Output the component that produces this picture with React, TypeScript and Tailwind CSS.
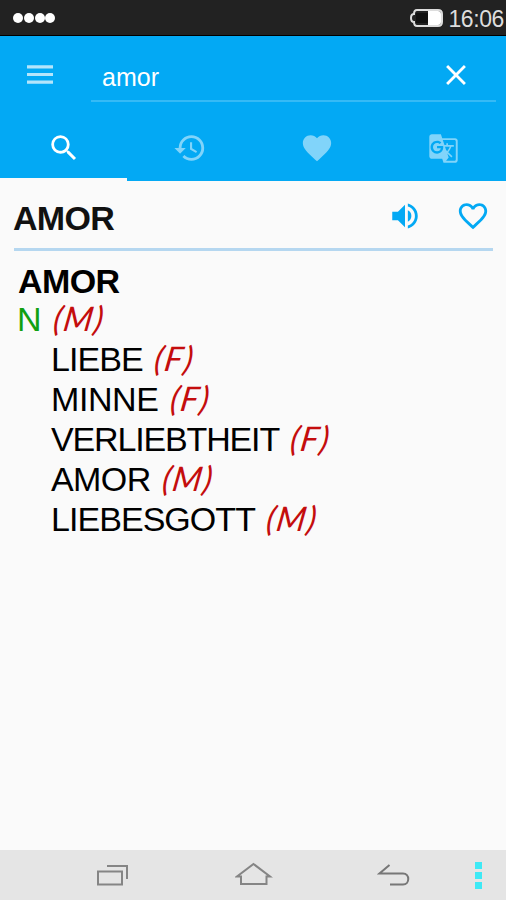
import clsx from "clsx";
import {
  MdClose,
  MdFavorite,
  MdFavoriteBorder,
  MdGTranslate,
  MdHistory,
  MdSearch,
  MdVolumeUp,
} from "react-icons/md";

const tabs = [
  { id: "search", label: "Search", Icon: MdSearch, size: "size-[34px]" },
  { id: "history", label: "History", Icon: MdHistory, size: "size-[34px]" },
  { id: "favorites", label: "Favorites", Icon: MdFavorite, size: "size-[34px]" },
  { id: "translate", label: "Translate", Icon: MdGTranslate, size: "size-[31px] mt-[2px]" },
];

const translations = [
  { word: "LIEBE", gender: "(F)", tracking: "tracking-[-0.9px]" },
  { word: "MINNE", gender: "(F)", tracking: "tracking-[-0.4px]" },
  { word: "VERLIEBTHEIT", gender: "(F)", tracking: "tracking-[-1.15px]" },
  { word: "AMOR", gender: "(M)", tracking: "tracking-[-0.6px]" },
  { word: "LIEBESGOTT", gender: "(M)", tracking: "tracking-[-0.95px]" },
];

function StatusBar() {
  return (
    <div className="flex h-9 items-center justify-between border-b border-black bg-[#222] pr-[2px] pl-[13px]">
      <div className="flex">
        {[0, 1, 2, 3].map((n) => (
          <span key={n} className="mr-[0.8px] size-[10px] rounded-full bg-white" />
        ))}
      </div>
      <div className="flex items-center">
        <svg className="h-5 w-[34px]" viewBox="0 0 34 20" fill="none">
          <path
            d="M7 2h21q4 0 4 4v8q0 4-4 4H7q-3 0-3-4-3 0-3-4t3-4q0-4 3-4z"
            stroke="#ddd"
            strokeWidth="2"
          />
          <path d="M6 5h12v10H6z" fill="#111" />
          <path d="M18 3h10q3 0 3 3v8q0 3-3 3H18z" fill="#fff" />
        </svg>
        <span className="mt-[3px] ml-[4px] text-[23px] leading-none tracking-[-0.4px] text-[#ddd]">16:06</span>
      </div>
    </div>
  );
}

function MenuIcon() {
  return (
    <svg className="mt-[6px] ml-1 h-[22px] w-[26px] opacity-70" viewBox="0 0 26 22" stroke="currentColor" strokeWidth="3.200">
      <path d="M0 2.800h26M0 10.500h26M0 18.200h26" />
    </svg>
  );
}

function Header() {
  return (
    <header className="h-[145px] bg-[#03a9f4] text-white">
      <div className="flex h-[79px] pt-[22px] pl-[23px]">
        <MenuIcon />
        <div className="ml-[38px] flex h-[44px] w-[405px] justify-between border-b-2 border-white/20 pl-[11px]">
          <span className="pt-[5px] text-[25px] leading-[28px]">amor</span>
          <MdClose className="mr-[23px] size-[34px]" />
        </div>
      </div>
      <nav className="grid h-[66px] grid-cols-4">
        {tabs.map(({ id, label, Icon, size }, i) => (
          <button
            key={id}
            aria-label={label}
            className={clsx(
              "flex items-start justify-center border-b-3 pt-4 pl-px",
              i === 0 ? "border-[#fafafa]" : "border-transparent text-white/50",
            )}
          >
            <Icon className={size} />
          </button>
        ))}
      </nav>
    </header>
  );
}

function Gender({ children }: { children: string }) {
  return (
    <span className="-mt-px ml-[12px] -skew-x-9 font-['Lato'] text-[34px] tracking-[1.3px] text-[#c40d0d] italic">
      {children}
    </span>
  );
}

function Entry() {
  return (
    <main className="flex-1 text-black">
      <div className="mr-[13px] ml-[14px] flex h-[70px] items-start justify-between border-b-3 border-[#b5d7f0]">
        <h1 className="mt-[19px] -ml-px text-[34px] leading-[36px] font-bold tracking-[-0.7px] text-[#111]">AMOR</h1>
        <div className="mt-[18px] mr-[3px] flex gap-[34px] text-[#03a9f4]">
          <MdVolumeUp className="size-[34px]" />
          <MdFavoriteBorder className="size-[34px]" />
        </div>
      </div>
      <div className="pt-[10px] pl-[18px] text-[34px] leading-[40px]">
        <h2 className="font-bold tracking-[-0.6px]">AMOR</h2>
        <p className="-mt-[2px] flex h-10">
          <span className="-ml-px text-[#11a011]">N</span>
          <Gender>(M)</Gender>
        </p>
        <ul className="pl-[33px]">
          {translations.map((t) => (
            <li key={t.word} className="flex h-10">
              <span className={t.tracking}>{t.word}</span>
              <Gender>{t.gender}</Gender>
            </li>
          ))}
        </ul>
      </div>
    </main>
  );
}

function NavBar() {
  return (
    <footer className="flex h-[50px] items-center bg-[#e5e5e5]">
      <svg className="ml-[96px] h-[26px] w-[34px]" viewBox="0 0 34 26" fill="none" stroke="#858585" strokeWidth="2">
        <path d="M2 9.500h24v13H2zM11 4h20v13" />
      </svg>
      <svg className="ml-[105px] h-[26px] w-[38px]" viewBox="0 0 38 26" fill="none" stroke="#858585" strokeWidth="2">
        <path d="M6 14.500H2L18.500 2 35 14.500h-3.500V22H6z" />
      </svg>
      <svg className="ml-[104px] h-[26px] w-[34px]" viewBox="0 0 34 26" fill="none" stroke="#777" strokeWidth="2">
        <path d="M12.500 3 2.500 11.500H26c7 0 7 11 0 11H13" />
      </svg>
      <div className="ml-[64px] flex flex-col gap-[3px]">
        {[0, 1, 2].map((n) => (
          <span key={n} className="size-[7px] bg-[#3fe9f5]" />
        ))}
      </div>
    </footer>
  );
}

export default function App() {
  return (
    <div className="flex h-[900px] w-[506px] flex-col overflow-hidden bg-[#fafafa] font-['Liberation_Sans',sans-serif]">
      <StatusBar />
      <Header />
      <Entry />
      <NavBar />
    </div>
  );
}
